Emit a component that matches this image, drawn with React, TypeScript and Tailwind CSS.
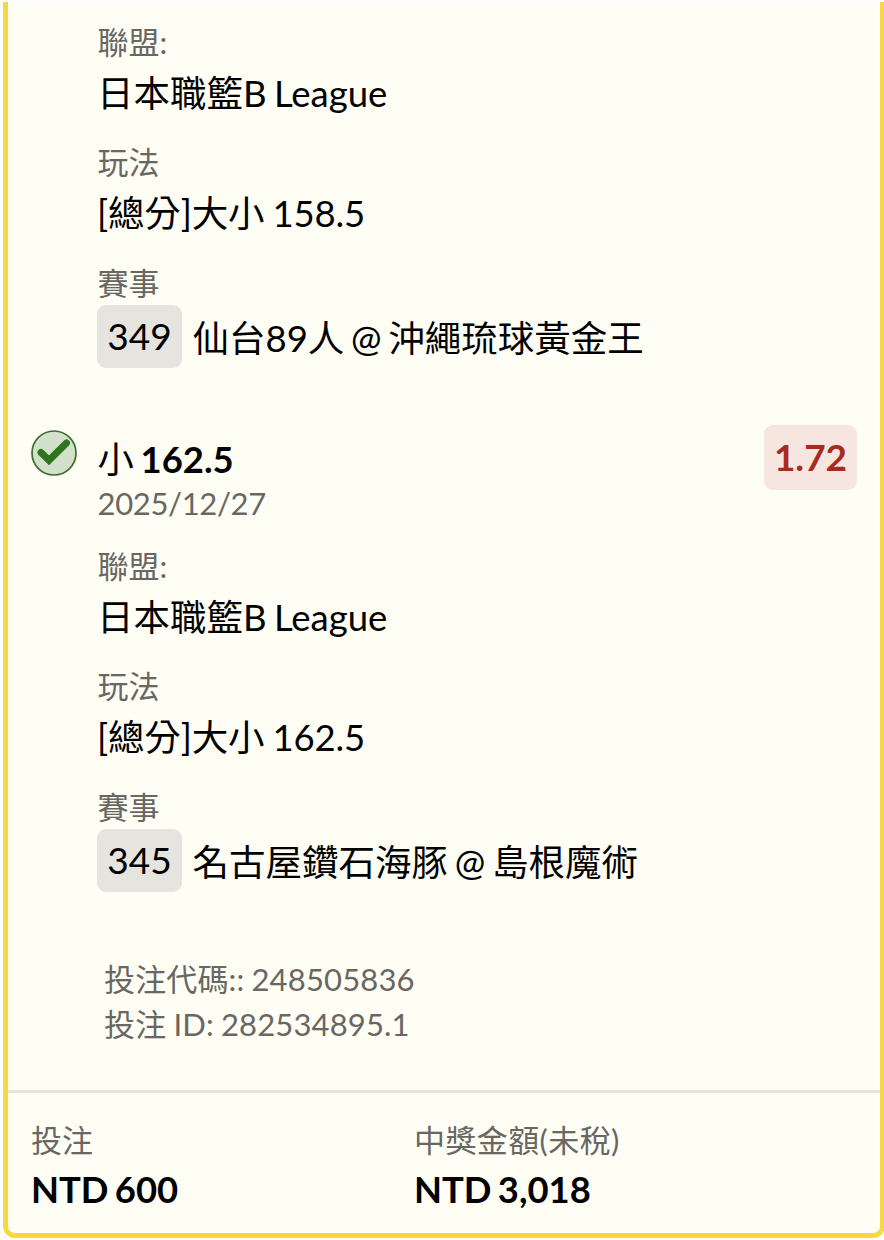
import React from "react";

interface Leg {
  pick?: string;
  line?: string;
  date?: string;
  odds?: string;
  league: string;
  market: string;
  code: string;
  match: string;
}

const legs: Leg[] = [
  {
    league: "日本職籃B League",
    market: "[總分]大小 158.5",
    code: "349",
    match: "仙台89人 @ 沖繩琉球黃金王",
  },
  {
    pick: "小",
    line: "162.5",
    date: "2025/12/27",
    odds: "1.72",
    league: "日本職籃B League",
    market: "[總分]大小 162.5",
    code: "345",
    match: "名古屋鑽石海豚 @ 島根魔術",
  },
];

function WonIcon() {
  return (
    <svg className="w-[46px] h-[46px]" viewBox="0 0 46 46" fill="none">
      <circle cx="23" cy="23" r="22" fill="#d3e1cb" stroke="#3f6d30" strokeWidth="1.7" />
      <path d="M10 22.5 18 30.3 35.5 13" stroke="#2f751d" strokeWidth="7" strokeLinecap="round" />
    </svg>
  );
}

function LegDetails({ leg }: { leg: Leg }) {
  return (
    <div className="pl-[89px]">
      <div className="h-[45px] pl-[0.5px] leading-[45px] text-[31px] text-[#686762]">聯盟:</div>
      <div className="h-[60px] leading-[57px] text-[36.5px] [word-spacing:-2px]">{leg.league}</div>
      <div className="mt-[14.5px] h-[45px] pl-[0.5px] leading-[45px] text-[31px] text-[#686762]">玩法</div>
      <div className="h-[60px] leading-[57px] text-[36.5px] tracking-[-0.15px] [word-spacing:-1.2px]">{leg.market}</div>
      <div className="mt-[16px] h-[44.5px] pl-[0.5px] leading-[45px] text-[31px] text-[#686762]">賽事</div>
      <div className="flex items-center h-[63px]">
        <span className="w-[85px] h-[63px] leading-[62px] rounded-[9px] bg-[#e6e4df] text-center text-[37px]">
          {leg.code}
        </span>
        <span className="ml-[10.5px] pt-[4px] leading-[63px] text-[36.5px] [word-spacing:-2.6px]">{leg.match}</span>
      </div>
    </div>
  );
}

export default function App() {
  return (
    <div
      lang="zh-TW"
      className="w-[884px] h-[1240px] bg-white overflow-hidden whitespace-nowrap text-black font-['Lato','Noto_Sans_CJK_TC',sans-serif]"
    >
      <div className="mt-0.5 ml-[3px] w-[882px] h-[1236px] border-x-[5px] border-b-[5px] border-[#f6d843] rounded-b-[12px] bg-[#fffef5]">
        <div className="pt-[18px]">
          <LegDetails leg={legs[0]} />
        </div>

        {/* Second selection */}
        <div className="mt-[57px] flex h-[105px] pl-[22.5px] pr-[23px]">
          <div className="mt-[5px] w-[67px]">
            <WonIcon />
          </div>
          <div className="flex-1 pt-[4px]">
            <div className="h-[59px] leading-[60px] text-[36.4px] [word-spacing:-2.6px]">
              {legs[1].pick} <span className="font-bold">{legs[1].line}</span>
            </div>
            <div className="h-[30px] leading-[30px] text-[31px] tracking-[-0.35px] text-[#686762]">{legs[1].date}</div>
          </div>
          <div className="w-[93px] h-[65px] leading-[64px] rounded-[9px] bg-[#f7e6e0] text-center text-[37px] font-bold text-[#a92b20]">
            {legs[1].odds}
          </div>
        </div>
        <div className="mt-[14px]">
          <LegDetails leg={legs[1]} />
        </div>

        <div className="mt-[65px] pl-[96px] text-[31px] leading-[45px] tracking-[0.15px] text-[#686762] [word-spacing:-1px]">
          <div>投注代碼:: 248505836</div>
          <div>投注 ID: 282534895.1</div>
        </div>

        {/* Totals */}
        <div className="mt-[43px] border-t-[3px] border-[#e5e4df] flex pl-[23px] pt-[25px]">
          <div className="w-[383px]">
            <div className="h-[45px] leading-[45px] text-[31px] text-[#686762]">投注</div>
            <div className="h-[54px] leading-[52px] text-[36.4px] font-bold [word-spacing:-2.6px]">NTD 600</div>
          </div>
          <div>
            <div className="h-[45px] leading-[45px] text-[31px] tracking-[0.4px] text-[#686762]">中獎金額(未稅)</div>
            <div className="h-[54px] leading-[52px] text-[36.4px] font-bold [word-spacing:-2.6px]">NTD 3,018</div>
          </div>
        </div>
      </div>
    </div>
  );
}
